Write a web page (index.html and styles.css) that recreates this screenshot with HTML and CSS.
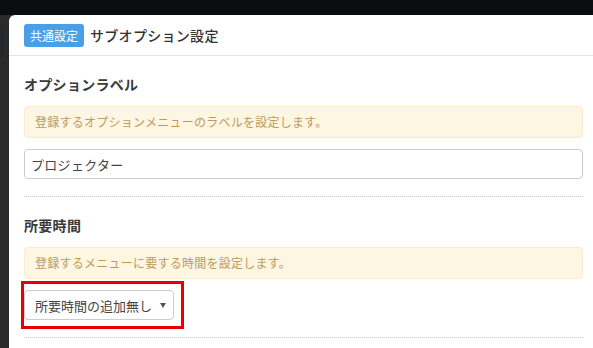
FILE: index.html
```html
<!DOCTYPE html>
<html lang="ja">
<head>
<meta charset="UTF-8">
<meta name="viewport" content="width=device-width, initial-scale=1.0">
<title>サブオプション設定</title>
<link rel="stylesheet" href="styles.css">
</head>
<body>

<div class="topbar"></div>

<div class="stage">
    <div class="side">
        <div class="side-btn"></div>
    </div>

    <div class="modal">
        <div class="modal-header">
            <span class="badge">共通設定</span>
            <span class="modal-title">サブオプション設定</span>
        </div>

        <div class="modal-body">
            <div class="section">
                <h4>オプションラベル</h4>
                <div class="alert">登録するオプションメニューのラベルを設定します。</div>
                <input type="text" class="text-input" value="プロジェクター">
            </div>

            <div class="section">
                <h4>所要時間</h4>
                <div class="alert">登録するメニューに要する時間を設定します。</div>
                <div class="highlight">
                    <div class="select-box">
                        <span>所要時間の追加無し</span>
                        <span class="caret"></span>
                    </div>
                </div>
            </div>
        </div>
    </div>
</div>

</body>
</html>
```

FILE: styles.css
```css
body {
    margin: 0;
    padding: 0;
    background-color: #2b2b2b;
    font-family: "Noto Sans CJK JP", "Noto Sans", sans-serif;
    color: #333;
    overflow: hidden;
}

.topbar {
    height: 15px;
    background-color: #0b0c0f;
}

.stage {
    display: flex;
    height: 333px;
}

.side {
    width: 9px;
    padding-top: 13px;
    background-color: #2a2a2a;
}

.side-btn {
    width: 2px;
    height: 28px;
    border: 1px solid #1a2330;
    border-left: none;
    border-radius: 0 3px 3px 0;
}

.modal {
    flex: 1;
    background-color: #fff;
    border-top-left-radius: 6px;
}

.modal-header {
    display: flex;
    align-items: center;
    gap: 6px;
    height: 41px;
    padding: 0 10px 0 15px;
    border-bottom: 1px solid #e5e5e5;
    box-sizing: border-box;
}

.badge {
    display: inline-block;
    height: 23px;
    line-height: 23px;
    padding: 0 6px;
    background-color: #4aa0e6;
    color: #fff;
    font-size: 12px;
    border-radius: 3px;
}

.modal-title {
    font-size: 14px;
    font-weight: 500;
    letter-spacing: 0.3px;
    color: #333;
}

.modal-body {
    padding: 18px 10px 0 15px;
}

.section {
    padding-bottom: 17px;
    border-bottom: 1px dotted #ccc;
    margin-bottom: 18px;
}

h4 {
    margin: 0 0 12px 0;
    font-size: 14px;
    line-height: 20px;
    font-weight: 700;
    letter-spacing: 0.3px;
    color: #3a3a3a;
}

.alert {
    padding: 7px 10px;
    line-height: 16px;
    font-size: 12px;
    letter-spacing: 0.25px;
    color: #c09a5c;
    background-color: #fcf6e2;
    border: 1px solid #faebcc;
    border-radius: 4px;
}

.text-input {
    display: block;
    width: 100%;
    height: 30px;
    margin-top: 11px;
    padding: 0 6px;
    font-family: inherit;
    font-size: 13px;
    letter-spacing: 0.3px;
    color: #444;
    border: 1px solid #ccc;
    border-radius: 4px;
    box-sizing: border-box;
}

.highlight {
    display: inline-block;
    margin: 2px 0 -9px -3px;
    padding: 6px 7px 6px 0;
    border: 3px solid #e60000;
}

.select-box {
    display: flex;
    align-items: center;
    justify-content: space-between;
    width: 150px;
    height: 30px;
    padding: 0 7px 0 10px;
    font-size: 13px;
    color: #444;
    border: 1px solid #ccc;
    border-radius: 4px;
    box-sizing: border-box;
}

.caret {
    width: 0;
    height: 0;
    border-left: 3px solid transparent;
    border-right: 3px solid transparent;
    border-top: 5px solid #555;
}
```
